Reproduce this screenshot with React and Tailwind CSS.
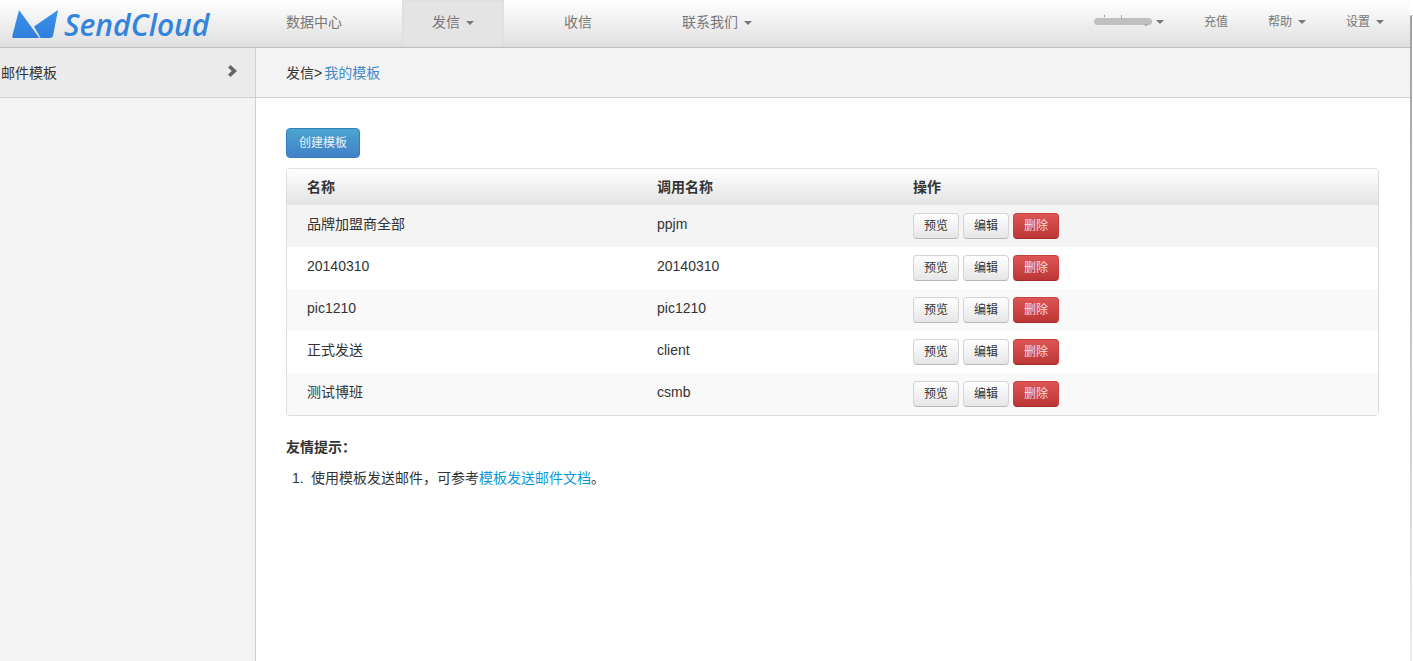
const rows = [
  { name: '品牌加盟商全部', code: 'ppjm' },
  { name: '20140310', code: '20140310' },
  { name: 'pic1210', code: 'pic1210' },
  { name: '正式发送', code: 'client' },
  { name: '测试博班', code: 'csmb' },
];

const Caret = ({ className = '' }) => (
  <span className={`inline-block w-0 h-0 border-x-[4px] border-x-transparent border-t-[4px] border-t-[#777] ${className}`} />
);

const Logo = () => (
  <div className="flex items-center pl-3 w-[256px] h-full">
    <svg width="47" height="28" viewBox="0 0 47 28" className="shrink-0">
      <defs>
        <linearGradient id="lg" x1="0" y1="0" x2="0" y2="1">
          <stop offset="0" stopColor="#3a92ee" />
          <stop offset="1" stopColor="#2f7fdb" />
        </linearGradient>
      </defs>
      <path d="M7 0 L27.4 28 L1 28 Q0 28 0.3 26 Z" fill="url(#lg)" />
      <path d="M46 0 L41 26 Q40.5 28 38 28 L28.6 28 L22 16.5 Z" fill="url(#lg)" />
    </svg>
    <span className="ml-[5px] text-[30px] leading-none italic font-semibold text-[#3384dd] font-['Open_Sans',sans-serif] mt-[2px]">
      SendCloud
    </span>
  </div>
);

const NavItem = ({ label, caret, active }) => (
  <div className={`ml-[30px] first:ml-0 px-[30px] h-full flex items-center pb-[2px] text-[14px] text-[#777] ${active ? 'bg-[#e4e4e4] shadow-[inset_0_0_3px_#d4d4d4]' : ''}`}>
    {label}
    {caret && <Caret className="ml-[6px]" />}
  </div>
);

const RightItem = ({ label, caret, className = '' }) => (
  <div className={`flex items-center text-[12px] text-[#777] ${className}`}>
    {label}
    {caret && <Caret className="ml-[6px]" />}
  </div>
);

const Btn = ({ children, danger }) => (
  <button
    className={`w-[46px] h-[26px] rounded-[4px] border text-[12px] flex items-center justify-center ${
      danger
        ? 'border-[#c9403c] border-b-[#a52a2a] bg-gradient-to-b from-[#dd5555] to-[#bd3636] text-[#f6dede]'
        : 'border-[#d4d4d4] border-b-[#b8b8b8] bg-gradient-to-b from-white to-[#e6e6e6] text-[#333]'
    }`}
  >
    {children}
  </button>
);

export default function App() {
  return (
    <div className="flex w-[1413px] h-[661px] overflow-hidden bg-white text-[14px] text-[#333] font-['Liberation_Sans','Noto_Sans_CJK_SC',sans-serif]">
      <div className="w-[1410px] flex flex-col shrink-0">
        <header className="h-[48px] shrink-0 flex items-center border-b border-[#bfbfbf] bg-gradient-to-b from-white to-[#dfdfdf]">
          <Logo />
          <nav className="flex h-full">
            <NavItem label="数据中心" />
            <NavItem label="发信" caret active />
            <NavItem label="收信" />
            <NavItem label="联系我们" caret />
          </nav>
          <div className="ml-auto flex items-center h-full pr-[26px] pb-[4px]">
            <div className="relative flex items-center mr-[40px]">
              <span className="w-[58px] h-[7px] rounded-full bg-[#c0c0c0]" />
              <span className="absolute left-[10px] top-[-3px] w-[1px] h-[2px] bg-[#999]" />
              <span className="absolute left-[27px] top-[-3px] w-[1px] h-[4px] bg-[#aaa]" />
              <span className="absolute left-[50px] top-[6px] w-[4px] h-[2px] rounded-b bg-[#aaa]" />
              <Caret className="ml-[4px]" />
            </div>
            <RightItem label="充值" className="mr-[40px]" />
            <RightItem label="帮助" caret className="mr-[40px]" />
            <RightItem label="设置" caret />
          </div>
        </header>
        <div className="flex flex-1 min-h-0">
          <aside className="w-[256px] shrink-0 bg-[#f3f3f3] border-r border-[#cfcfcf]">
            <div className="h-[50px] flex items-center justify-between pl-[1px] pr-[18px] bg-[#ebebeb] border-b border-[#d0d0d0] text-[#333]">
              <span className="mt-[1px]">邮件模板</span>
              <svg width="9" height="12" viewBox="0 0 9 12" className="mt-[-4px]">
                <path d="M2.5 0 L9 6 L2.5 12 L0 9.6 L3.8 6 L0 2.4 Z" fill="#666" />
              </svg>
            </div>
          </aside>
          <main className="flex-1 min-w-0">
            <div className="h-[50px] flex items-center pl-[30px] bg-[#f3f3f3] border-b border-[#d0d0d0]">
              <span className="mt-[1px]">
                发信<span className="pr-[2px]">&gt;</span><span className="text-[#428bca]">我的模板</span>
              </span>
            </div>
            <div className="pt-[30px] pl-[30px] pr-[30px]">
              <button className="w-[74px] h-[30px] rounded-[4px] border border-[#357ebd] bg-gradient-to-b from-[#4aa5cf] to-[#4280c8] text-[12px] text-[#e6f1f8]">
                创建模板
              </button>
              <div className="mt-[10px] w-[1093px] border border-[#ddd] rounded-[4px] overflow-hidden">
                <div className="h-[36px] grid grid-cols-[350px_256px_1fr] items-center pl-[20px] font-bold text-[14px] bg-gradient-to-b from-white to-[#e3e3e3]">
                  <div>名称</div>
                  <div>调用名称</div>
                  <div>操作</div>
                </div>
                {rows.map((row, i) => (
                  <div
                    key={row.code}
                    className={`h-[42px] grid grid-cols-[350px_256px_1fr] items-center pl-[20px] ${
                      i === 0 ? 'bg-[#f4f4f4]' : i % 2 === 0 ? 'bg-[#f9f9f9]' : 'bg-white'
                    }`}
                  >
                    <div className="mt-[-4px]">{row.name}</div>
                    <div className="mt-[-4px]">{row.code}</div>
                    <div className="flex gap-[4px]">
                      <Btn>预览</Btn>
                      <Btn>编辑</Btn>
                      <Btn danger>删除</Btn>
                    </div>
                  </div>
                ))}
              </div>
              <p className="mt-[21px] font-bold leading-[20px]">友情提示：</p>
              <ol className="mt-[11px] leading-[20px]">
                <li className="flex">
                  <span className="w-[25px] pl-[6px]">1.</span>
                  <span>
                    使用模板发送邮件，可参考<span className="text-[#0b97d6]">模板发送邮件文档</span>。
                  </span>
                </li>
              </ol>
            </div>
          </main>
        </div>
      </div>
      <div className="flex-1 mt-[15px] border-t border-[#c8c8c8]">
        <div className="w-[2px] h-full bg-gradient-to-b from-[#a0a0a0] to-[#ececec]" />
      </div>
    </div>
  );
}
